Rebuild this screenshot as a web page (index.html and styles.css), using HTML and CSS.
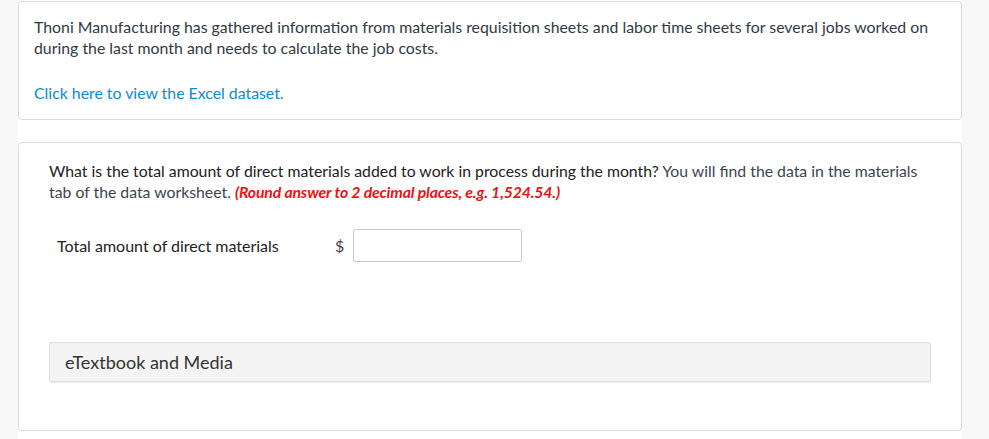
FILE: index.html
```html
<!DOCTYPE html>
<html>
<head>
<meta charset="utf-8">
<link rel="stylesheet" href="styles.css">
</head>
<body>
<div class="page">
  <div class="card intro">
    <p class="intro-text">Thoni Manufacturing has gathered information from materials requisition sheets and labor time sheets for several jobs worked on during the last month and needs to calculate the job costs.</p>
    <a class="link" href="#">Click here to view the Excel dataset.</a>
  </div>
  <div class="card question">
    <p class="q-text"><span class="q-main">What is the total amount of direct materials added to work in process during the month?</span> You will find the data in the materials tab of the data worksheet. <span class="q-note">(Round answer to 2 decimal places, e.g. 1,524.54.)</span></p>
    <div class="answer-row">
      <span class="answer-label">Total amount of direct materials</span>
      <span class="currency">$</span>
      <input class="answer-input" type="text">
    </div>
    <div class="media-bar">eTextbook and Media</div>
  </div>
</div>
</body>
</html>
```

FILE: styles.css
```css
html, body {
  margin: 0;
  padding: 0;
  background: #f8f8f8;
  font-family: Lato, "Open Sans", "Liberation Sans", sans-serif;
}

.page {
  margin-left: 18px;
  width: 944px;
  background: #ffffff;
  padding-top: 1px;
  padding-bottom: 9px;
}

.card {
  border: 1px solid #dcdcdc;
  border-radius: 4px;
  background: #fff;
}

.intro {
  padding: 14px 15px 16px 15px;
  font-size: 15.85px;
  line-height: 21px;
  color: #2f3a44;
}

.intro-text {
  margin: 0 0 24px 0;
}

.link {
  color: #0a8bd8;
  text-decoration: none;
}

.question {
  margin-top: 22px;
  padding: 17px 30px 48px 30px;
}

.q-text {
  margin: 0;
  font-size: 15.8px;
  line-height: 21px;
  color: #3a4551;
}

.q-main {
  color: #222;
}

.q-note {
  color: #ee1111;
  font-weight: bold;
  font-style: italic;
  letter-spacing: -0.15px;
}

.answer-row {
  display: flex;
  align-items: center;
  margin-top: 27px;
  padding-left: 8px;
  font-size: 16px;
  color: #222;
}

.answer-label {
  width: 278px;
}

.currency {
  width: 18px;
  color: #444;
  font-size: 16px;
}

.answer-input {
  box-sizing: border-box;
  width: 169px;
  height: 33px;
  border: 1px solid #cccccc;
  border-radius: 2px;
  margin: 0;
  padding: 0 6px;
  font-family: inherit;
  font-size: 14px;
}

.media-bar {
  margin-top: 80px;
  height: 40px;
  box-sizing: border-box;
  display: flex;
  align-items: center;
  padding-left: 15px;
  padding-bottom: 1px;
  background: #f4f4f4;
  border: 1px solid #dedede;
  border-radius: 2px;
  box-shadow: 0 1px 1px rgba(0,0,0,0.08);
  font-size: 18px;
  color: #333;
}
```
